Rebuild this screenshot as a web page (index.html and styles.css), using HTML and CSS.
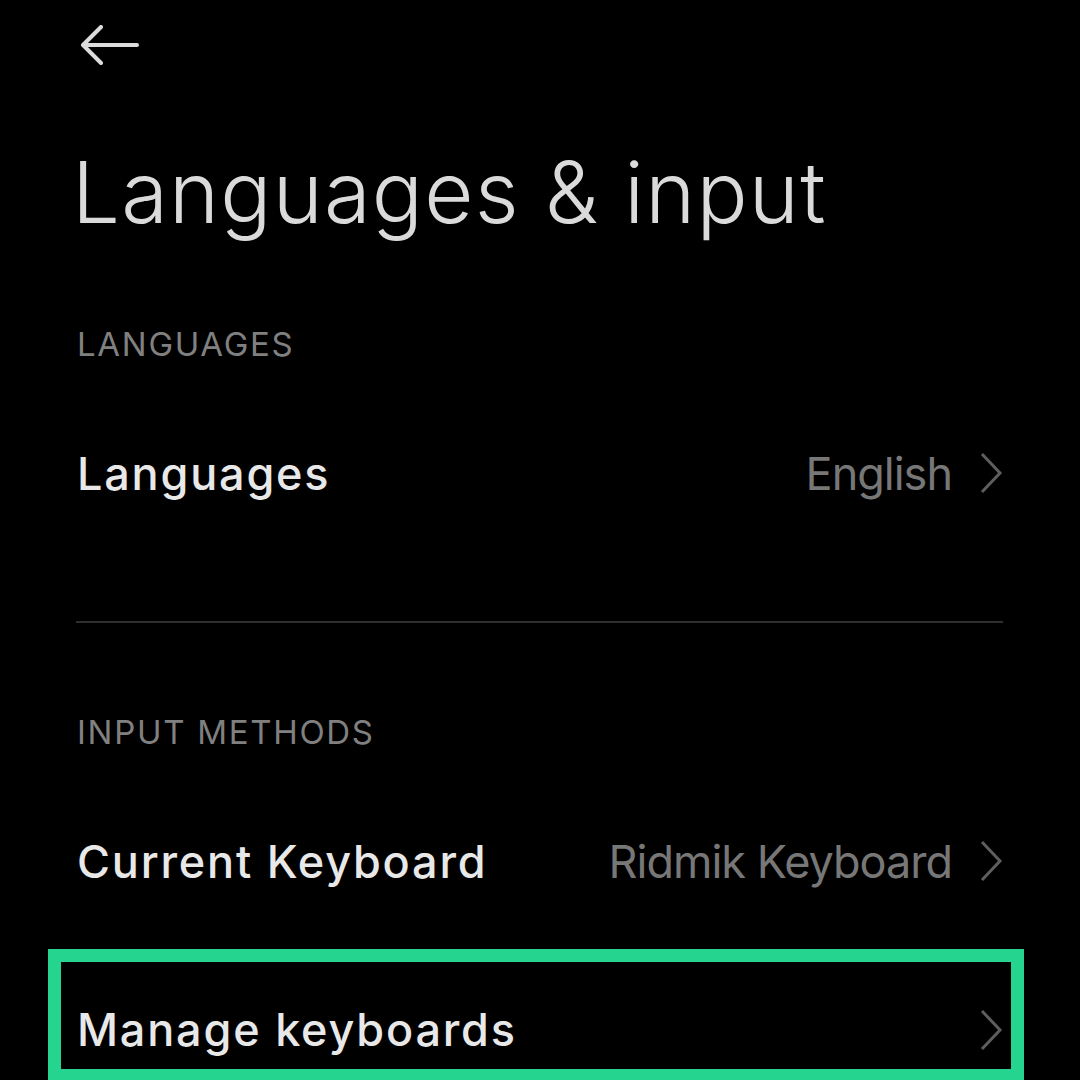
FILE: index.html
```html
<!DOCTYPE html>
<html lang="en">
<head>
<meta charset="utf-8">
<title>Languages &amp; input</title>
<link rel="stylesheet" href="styles.css">
</head>
<body>
<div class="page">
  <div class="topbar">
    <svg class="back" width="60" height="40" viewBox="0 0 60 40"><path d="M4 20 H57 M21 2 L3 20 L21 38" fill="none" stroke="#dcdcdc" stroke-width="4" stroke-linecap="round" stroke-linejoin="round"/></svg>
  </div>
  <h1 class="title">Languages &amp; input</h1>

  <div class="section-head">LANGUAGES</div>
  <div class="row">
    <span class="label">Languages</span>
    <span class="value">English</span>
    <svg class="chev" width="24" height="42" viewBox="0 0 24 42"><path d="M3 2 L21 21 L3 40" fill="none" stroke="#5e5e5e" stroke-width="3"/></svg>
  </div>
  <div class="divider"></div>

  <div class="section-head second">INPUT METHODS</div>
  <div class="row">
    <span class="label">Current Keyboard</span>
    <span class="value">Ridmik Keyboard</span>
    <svg class="chev" width="24" height="42" viewBox="0 0 24 42"><path d="M3 2 L21 21 L3 40" fill="none" stroke="#5e5e5e" stroke-width="3"/></svg>
  </div>
  <div class="highlight">
    <div class="row-inner">
      <span class="label">Manage keyboards</span>
      <svg class="chev" width="24" height="42" viewBox="0 0 24 42"><path d="M3 2 L21 21 L3 40" fill="none" stroke="#5e5e5e" stroke-width="3"/></svg>
    </div>
  </div>
</div>
</body>
</html>
```

FILE: styles.css
```css
html, body {
  margin: 0;
  padding: 0;
  background: #000;
}
body {
  font-family: Inter, Lato, sans-serif;
  color: #e6e6e6;
  width: 1080px;
  height: 1080px;
  overflow: hidden;
}
.page {
  display: flex;
  flex-direction: column;
}
.topbar {
  height: 90px;
  padding-left: 80px;
  padding-top: 25px;
  box-sizing: border-box;
}
.back {
  display: block;
}
.title {
  margin: 0;
  padding-left: 72px;
  height: 203px;
  line-height: 206px;
  font-size: 85px;
  font-weight: 300;
  color: #dadada;
  letter-spacing: 1.2px;
}
.section-head {
  padding-left: 77px;
  height: 102px;
  line-height: 102px;
  font-size: 33px;
  font-weight: 400;
  color: #808080;
  letter-spacing: 1.7px;
}
.section-head.second {
  margin-top: 58px;
}
.row {
  display: flex;
  align-items: center;
  height: 156px;
  padding: 0 77px 0 77px;
}
.label {
  font-size: 45px;
  font-weight: 500;
  color: #e8e8e8;
  flex: 1;
  letter-spacing: 1.8px;
}
.value {
  font-size: 45px;
  font-weight: 400;
  color: #777;
  margin-right: 27px;
  letter-spacing: -1px;
}
.chev {
  display: block;
}
.divider {
  margin: 70px 77px 0 76px;
  height: 2px;
  background: #2e2e2e;
}
.highlight {
  margin: 10px 0 0 48px;
  width: 976px;
  border: 13px solid #25d48f;
  box-sizing: border-box;
  height: 133px;
}
.row-inner {
  display: flex;
  align-items: center;
  height: 107px;
  padding: 40px 8px 12px 16px;
  box-sizing: border-box;
}
.row-inner .label {
  line-height: 1.2;
}
```
